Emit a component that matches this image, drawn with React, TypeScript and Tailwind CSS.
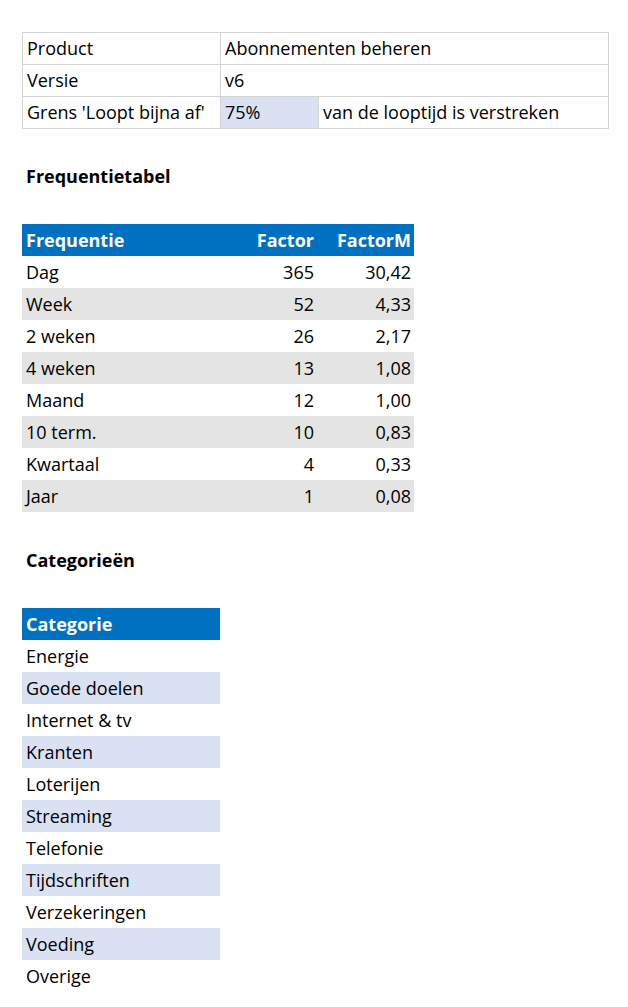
const font = { fontFamily: '"Open Sans", "Noto Sans", sans-serif' };

const frequencies: [string, string, string][] = [
  ["Dag", "365", "30,42"],
  ["Week", "52", "4,33"],
  ["2 weken", "26", "2,17"],
  ["4 weken", "13", "1,08"],
  ["Maand", "12", "1,00"],
  ["10 term.", "10", "0,83"],
  ["Kwartaal", "4", "0,33"],
  ["Jaar", "1", "0,08"],
];

const categories = [
  "Energie",
  "Goede doelen",
  "Internet & tv",
  "Kranten",
  "Loterijen",
  "Streaming",
  "Telefonie",
  "Tijdschriften",
  "Verzekeringen",
  "Voeding",
  "Overige",
];

const cell = "h-8 border-r border-b border-[#d4d4d4] pl-1 leading-[31px] whitespace-nowrap";

export default function App() {
  return (
    <div
      className="min-h-[1007px] w-[628px] bg-white pt-8 pl-[22px] text-[18px] leading-[32px] text-black"
      style={font}
    >
      {/* algemene instellingen */}
      <div className="grid w-[587px] grid-cols-[198px_98px_290px] border-t border-l border-[#d4d4d4]">
        <div className={cell}>Product</div>
        <div className={`${cell} col-span-2`}>Abonnementen beheren</div>
        <div className={cell}>Versie</div>
        <div className={`${cell} col-span-2`}>v6</div>
        <div className={cell}>Grens 'Loopt bijna af'</div>
        <div className={`${cell} bg-[#d9e1f2]`}>75%</div>
        <div className={cell}>van de looptijd is verstreken</div>
      </div>

      <div className="mt-[31px] h-8 pl-1 font-bold">Frequentietabel</div>

      <div className="mt-8 w-[392px]">
        <div className="grid h-8 grid-cols-[198px_98px_96px] bg-[#0070c0] font-bold text-white">
          <div className="pl-1">Frequentie</div>
          <div className="pr-1 text-right">Factor</div>
          <div className="pr-[3px] text-right">FactorM</div>
        </div>
        {frequencies.map(([name, factor, factorM], i) => (
          <div
            key={name}
            className={`grid h-8 grid-cols-[198px_98px_96px] ${
              i % 2 === 1 ? "bg-[#e4e4e4]" : "bg-white"
            }`}
          >
            <div className="pl-1">{name}</div>
            <div className="pr-1 text-right">{factor}</div>
            <div className="pr-[3px] text-right">{factorM}</div>
          </div>
        ))}
      </div>

      <div className="mt-8 h-8 pl-1 font-bold">Categorieën</div>

      <div className="mt-8 w-[198px]">
        <div className="h-8 bg-[#0070c0] pl-1 font-bold text-white">Categorie</div>
        {categories.map((c, i) => (
          <div
            key={c}
            className={`h-8 whitespace-nowrap pl-1 ${i % 2 === 1 ? "bg-[#d9e1f2]" : "bg-white"}`}
          >
            {c}
          </div>
        ))}
      </div>
    </div>
  );
}
